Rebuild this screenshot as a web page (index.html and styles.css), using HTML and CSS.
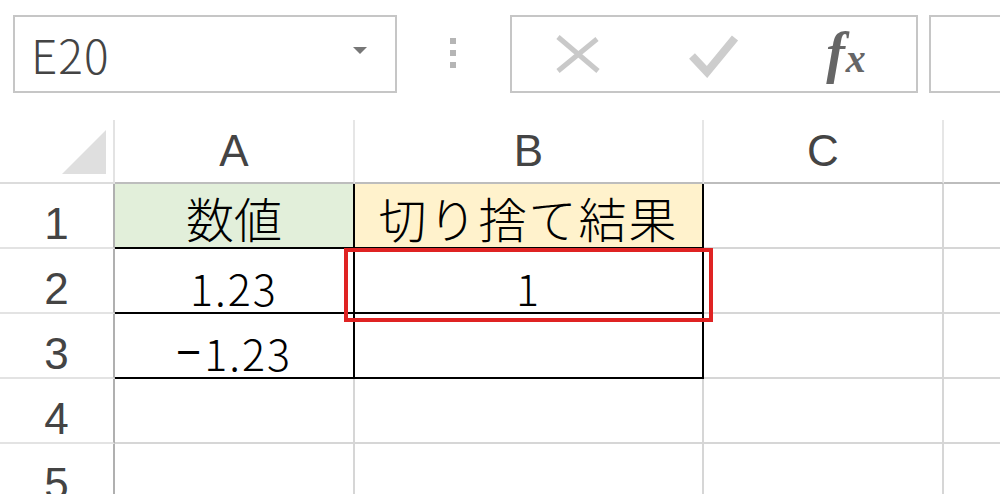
FILE: index.html
```html
<!DOCTYPE html>
<html lang="ja">
<head>
<meta charset="utf-8">
<title>Excel</title>
<link rel="stylesheet" href="styles.css">
</head>
<body>
<div class="toolbar">
  <div class="namebox">
    <span class="name">E20</span>
    <span class="caret"></span>
  </div>
  <div class="grip"><span></span><span></span><span></span></div>
  <div class="fbox">
    <div class="slot s1">
      <svg width="46" height="40" viewBox="0 0 46 40"><path d="M3 3 L43 37 M3 37 L42 5" stroke="#c9c9c9" stroke-width="5" fill="none"/></svg>
    </div>
    <div class="slot s2">
      <svg width="50" height="46" viewBox="0 0 50 46"><path d="M3 24 L18 40 L46 6" stroke="#cdcdcd" stroke-width="8" fill="none"/></svg>
    </div>
    <div class="slot s3"><span class="fx-f">f</span><span class="fx-x">x</span></div>
  </div>
  <div class="fbox2"></div>
</div>
<div class="sheet">
  <div class="cell corner"><span class="tri"></span></div>
  <div class="cell colh">A</div>
  <div class="cell colh">B</div>
  <div class="cell colh">C</div>
  <div class="cell colh last"></div>

  <div class="cell rowh">1</div>
  <div class="cell data jp green bk-r bk-b">数値</div>
  <div class="cell data jp yellow bk-r bk-b">切り捨て結果</div>
  <div class="cell data"></div>
  <div class="cell data last"></div>

  <div class="cell rowh">2</div>
  <div class="cell data num bk-r bk-b">1.23</div>
  <div class="cell data num bk-r bk-b">1</div>
  <div class="cell data"></div>
  <div class="cell data last"></div>

  <div class="cell rowh">3</div>
  <div class="cell data num bk-r bk-b"><span class="minus">−</span>1.23</div>
  <div class="cell data num bk-r bk-b"></div>
  <div class="cell data"></div>
  <div class="cell data last"></div>

  <div class="cell rowh">4</div>
  <div class="cell data"></div>
  <div class="cell data"></div>
  <div class="cell data"></div>
  <div class="cell data last"></div>

  <div class="cell rowh">5</div>
  <div class="cell data"></div>
  <div class="cell data"></div>
  <div class="cell data"></div>
  <div class="cell data last"></div>

  <div class="highlight"></div>
</div>
</body>
</html>
```

FILE: styles.css
```css
html, body {
  margin: 0;
  padding: 0;
  background: #ffffff;
}
body {
  width: 1000px;
  height: 494px;
  overflow: hidden;
  font-family: "Liberation Sans", Arial, sans-serif;
}

/* ---------- toolbar ---------- */
.toolbar {
  display: flex;
  align-items: flex-start;
  height: 120px;
  box-sizing: border-box;
  padding: 15px 0 0 13px;
}
.namebox {
  width: 384px;
  height: 78px;
  box-sizing: border-box;
  border: 2px solid #c6c6c6;
  display: flex;
  align-items: center;
  justify-content: space-between;
  padding: 0 28px 0 16px;
}
.name {
  font-family: "Noto Sans CJK JP", "Noto Sans", sans-serif;
  font-weight: 300;
  font-size: 46px;
  letter-spacing: 1px;
  color: #444444;
  line-height: 1.2;
  padding-top: 2px;
}
.caret {
  width: 0;
  height: 0;
  border-left: 7px solid transparent;
  border-right: 7px solid transparent;
  border-top: 7px solid #777777;
  margin-top: -8px;
}
.grip {
  margin-left: 53px;
  padding-top: 23px;
  display: flex;
  flex-direction: column;
  gap: 6px;
}
.grip span {
  display: block;
  width: 6px;
  height: 6px;
  background: #b5b5b5;
}
.fbox {
  margin-left: 54px;
  width: 408px;
  height: 78px;
  box-sizing: border-box;
  border: 2px solid #c6c6c6;
  display: flex;
}
.slot {
  display: flex;
  align-items: center;
  justify-content: center;
  height: 100%;
}
.s1 { width: 132px; }
.s2 { width: 140px; padding-top: 2px; box-sizing: border-box; }
.s3 {
  width: 124px;
  font-family: "Liberation Serif", "Times New Roman", serif;
  font-style: italic;
  font-weight: bold;
  color: #666666;
  align-items: baseline;
  padding-top: 8px;
  box-sizing: border-box;
}
.fx-f { font-size: 56px; line-height: 1; }
.fx-x { font-size: 40px; line-height: 1; margin-left: 1px; }
.fbox2 {
  margin-left: 11px;
  flex: 1;
  height: 78px;
  box-sizing: border-box;
  border: 2px solid #c6c6c6;
  border-right: none;
}

/* ---------- sheet ---------- */
.sheet {
  position: relative;
  display: grid;
  grid-template-columns: 115px 240px 349px 240px 56px;
  grid-template-rows: 64px 65px 65px 65px 65px 65px;
}
.cell {
  box-sizing: border-box;
  border-right: 2px solid #d6d6d6;
  border-bottom: 2px solid #d6d6d6;
  display: flex;
  justify-content: center;
  min-width: 0;
}
.cell.last { border-right: none; }

.corner {
  border-right-color: #e3e3e3;
  border-bottom-color: #dcdcdc;
  position: relative;
}
.tri {
  position: absolute;
  left: 62px;
  top: 10px;
  width: 0;
  height: 0;
  border-left: 44px solid transparent;
  border-bottom: 44px solid #dfdfdf;
}
.colh {
  border-right-color: #e6e6e6;
  border-bottom-color: #bdbdbd;
  align-items: center;
  font-size: 44px;
  line-height: 1;
  color: #444444;
}
.rowh {
  border-right-color: #b0b0b0;
  border-bottom-color: #e3e3e3;
  align-items: flex-end;
  padding-bottom: 1px;
  font-size: 44px;
  line-height: 1;
  color: #444444;
}
.data {
  color: #000000;
}
.jp {
  font-family: "Noto Sans CJK JP", "Noto Sans", sans-serif;
  font-weight: 300;
  font-size: 48px;
  line-height: 56px;
  align-items: center;
  padding-top: 3px;
}
.num {
  font-family: "Noto Sans CJK JP", "Noto Sans", sans-serif;
  font-weight: 300;
  font-size: 43px;
  letter-spacing: 2px;
  line-height: 1;
  align-items: flex-end;
  padding-bottom: 3px;
}
.minus {
  font-family: "Liberation Sans", Arial, sans-serif;
  font-weight: normal;
  margin-right: 1px;
}
.green { background: #e2efda; }
.yellow { background: #fff2cc; letter-spacing: 2px; }
.bk-r { border-right-color: #000000; }
.bk-b { border-bottom-color: #000000; }

.highlight {
  position: absolute;
  left: 344px;
  top: 128px;
  width: 369px;
  height: 74px;
  box-sizing: border-box;
  border: 4px solid #df2323;
}
```
